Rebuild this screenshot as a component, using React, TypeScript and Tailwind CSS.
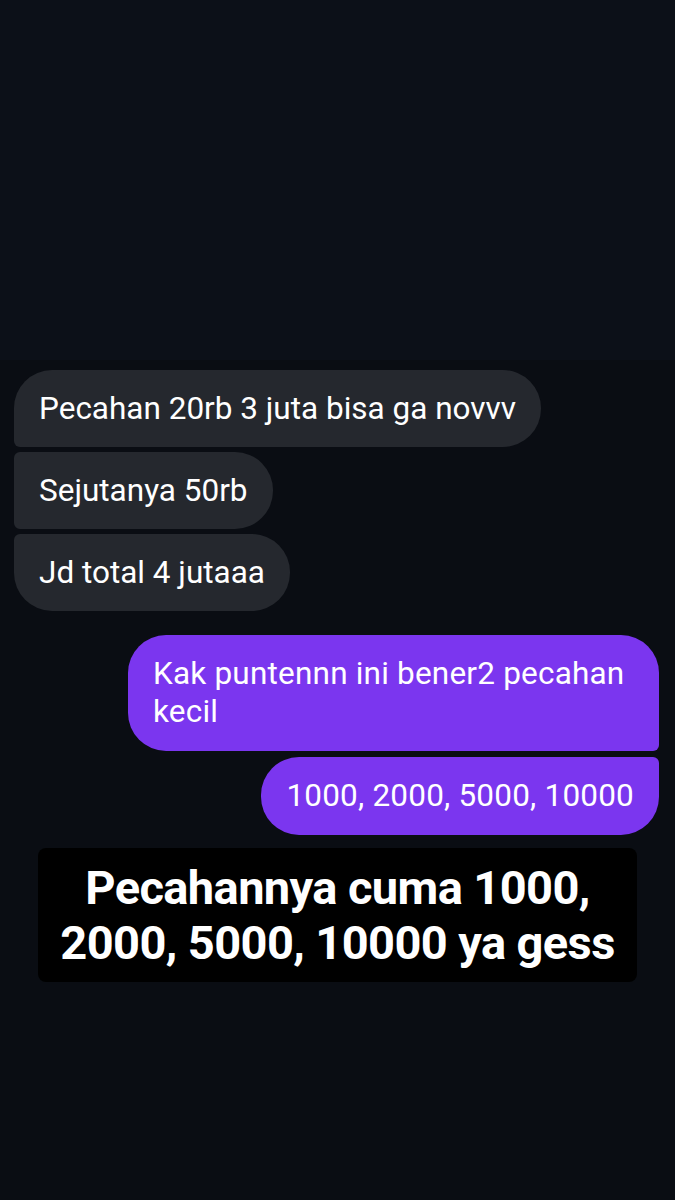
import React from 'react';

type Msg = { text: string; shape: string };

const THEIRS: Msg[] = [
  { text: 'Pecahan 20rb 3 juta bisa ga novvv', shape: 'rounded-[38px] rounded-bl-[6px]' },
  { text: 'Sejutanya 50rb', shape: 'rounded-[38px] rounded-tl-[6px] rounded-bl-[6px]' },
  { text: 'Jd total 4 jutaaa', shape: 'rounded-[38px] rounded-tl-[6px]' },
];

const MINE: Msg[] = [
  { text: 'Kak puntennn ini bener2 pecahan kecil', shape: 'rounded-[38px] rounded-br-[6px]' },
  { text: '1000, 2000, 5000, 10000', shape: 'rounded-[38px] rounded-tr-[6px]' },
];

export default function App() {
  return (
    <div className="w-[675px] h-[1200px] bg-[#0a0d13] flex flex-col font-['Roboto','Liberation_Sans',sans-serif]">
      <div className="h-[360px] bg-[#0c1018]" />
      <div className="flex flex-col gap-[5px] px-[14px] pt-[10px]">
        {THEIRS.map((m) => (
          <div
            key={m.text}
            className={`self-start bg-[#25282e] text-white text-[31.5px] leading-[33px] px-[25px] py-[22px] ${m.shape}`}
          >
            {m.text}
          </div>
        ))}
      </div>
      <div className="flex flex-col items-end gap-[6px] pl-[14px] pr-[16px] pt-[24px]">
        {MINE.map((m) => (
          <div
            key={m.text}
            className={`max-w-[531px] bg-[#7b36ef] text-white text-[31.5px] leading-[38px] px-[25px] py-[20px] tracking-[0.2px] ${m.shape}`}
          >
            {m.text}
          </div>
        ))}
      </div>
      <div className="mx-[38px] mt-[13px] bg-black rounded-[8px] py-[12px] px-[4px] text-center">
        <p className="text-white font-bold text-[47px] leading-[55px] tracking-[-0.6px]">
          Pecahannya cuma 1000,
          <br />
          2000, 5000, 10000 ya gess
        </p>
      </div>
    </div>
  );
}
